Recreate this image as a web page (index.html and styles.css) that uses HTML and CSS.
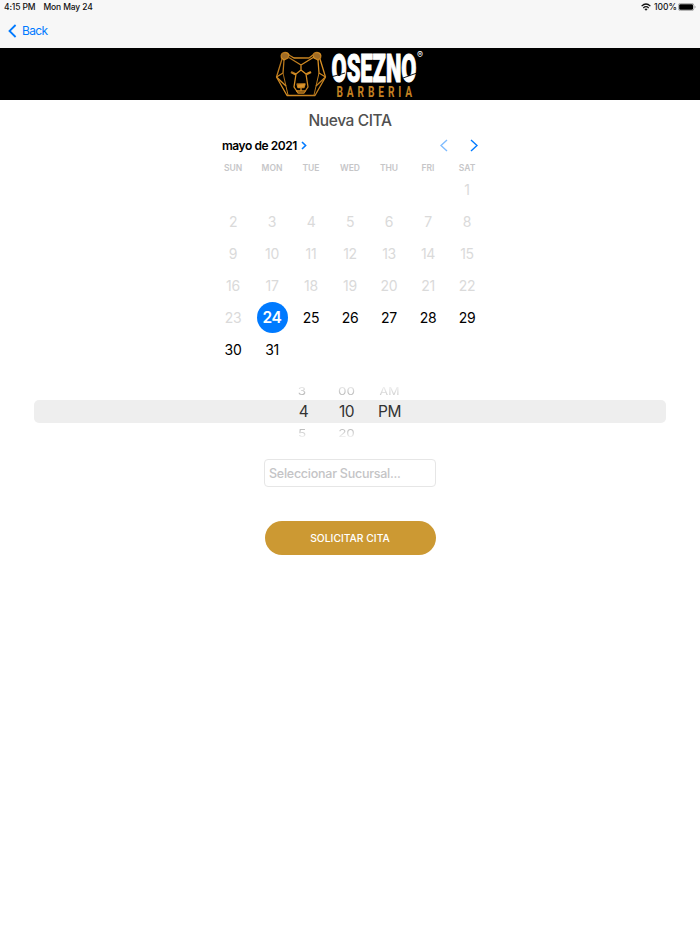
FILE: index.html
```html
<!DOCTYPE html>
<html lang="es">
<head>
  <meta charset="UTF-8" />
  <meta name="viewport" content="width=device-width, initial-scale=1.0" />
  <title>Nueva CITA</title>
  <link rel="stylesheet" href="styles.css">
</head>
<body>
  <header class="topbar">
    <div class="status">
      <span class="clock">4:15 PM</span>
      <span class="date">Mon May 24</span>
      <svg class="wifi" width="10" height="8" viewBox="0 0 10 8" fill="none" stroke="#111" stroke-width="1.3">
        <path d="M.6 3.1Q5-1.1 9.4 3.1M2.3 4.9Q5 2.4 7.7 4.9" />
        <path d="M3.4 6.1Q5 4.9 6.6 6.1L5 7.8z" fill="#111" stroke="none" />
      </svg>
      <span class="percent">100%</span>
      <svg class="battery" width="18" height="8" viewBox="0 0 18 8">
        <rect x=".4" y=".4" width="15.4" height="7.2" rx="2" fill="none" stroke="#999" stroke-width=".8" />
        <rect x="1.2" y="1.2" width="13.8" height="5.6" rx="1.2" fill="#000" />
        <path d="M16.6 2.7q1 .3 1 1.3t-1 1.3z" fill="#999" />
      </svg>
    </div>
    <a class="back" href="#">
      <svg width="9" height="14" viewBox="0 0 9 14"><path d="M7.6 1L1.5 7l6.1 6" /></svg>
      <span>Back</span>
    </a>
  </header>

  <div class="banner">
    <svg width="160" height="52" viewBox="270 48 160 52">
      <defs>
        <linearGradient id="gold" x1="0" y1="0" x2="1" y2="1">
          <stop offset="0" stop-color="#a86c1a" />
          <stop offset=".5" stop-color="#dc9224" />
          <stop offset="1" stop-color="#b8781d" />
        </linearGradient>
      </defs>
      <g transform="translate(274 48)" fill="none" stroke="url(#gold)" stroke-width="1.3" stroke-linejoin="round">
        <path d="M15 7L20 10H35L39 7" />
        <path d="M7.500 10Q6 5 11 4.300Q14 4.300 15 7L14 10L10 12z" fill="#a06c26" />
        <path d="M46.500 10Q48 5 43 4.300Q40 4.300 39 7L40 10L44 12z" fill="#a06c26" />
        <path d="M8 11L2.500 29L13 47.500H41L51.500 29L46 11" />
        <path d="M10 12L9 25L2.500 29L12 38M44 12L45 25L51.500 29L42 38" />
        <path d="M9 25L14 47M45 25L40 47" stroke-width=".9" />
        <path d="M14 9L27 17L40 9M27 17V22M27 22L22 26L20 39L24 45H30L34 39L32 26L27 22" />
        <path d="M17 24L22 26.500M37 24L32 26.500" stroke-width="2.400" />
        <path d="M23 36H31L30 39.500H24z" fill="#d99430" />
        <path d="M27 40V43M22 43H32" />
      </g>
      <text class="brand" transform="translate(331.500 81.500) scale(1 1.550)" textLength="85" lengthAdjust="spacingAndGlyphs">OSEZNO</text>
      <path d="M331 77l14-4M403 78l14-5" stroke="#000" stroke-width=".9" />
      <text class="brand-mark" x="417" y="58">®</text>
      <text class="brand-sub" transform="translate(336.500 96.700) scale(.7 1)" textLength="108">BARBERIA</text>
    </svg>
  </div>

  <main>
    <h1>Nueva CITA</h1>

    <section class="calendar">
      <div class="month">
        <span>mayo de 2021</span>
        <svg class="more" width="6" height="9" viewBox="0 0 6 9"><path d="M1 1l3.600 3.500L1 8" /></svg>
        <svg class="prev" width="8" height="13" viewBox="0 0 8 13"><path d="M7 1L1 6.500 7 12" /></svg>
        <svg class="next" width="8" height="13" viewBox="0 0 8 13"><path d="M1 1l6 5.500L1 12" /></svg>
      </div>
      <div class="week names">
        <span>SUN</span><span>MON</span><span>TUE</span><span>WED</span><span>THU</span><span>FRI</span><span>SAT</span>
      </div>
      <div class="week days">
        <span class="past first">1</span>
        <span class="past">2</span><span class="past">3</span><span class="past">4</span><span class="past">5</span><span class="past">6</span><span class="past">7</span><span class="past">8</span>
        <span class="past">9</span><span class="past">10</span><span class="past">11</span><span class="past">12</span><span class="past">13</span><span class="past">14</span><span class="past">15</span>
        <span class="past">16</span><span class="past">17</span><span class="past">18</span><span class="past">19</span><span class="past">20</span><span class="past">21</span><span class="past">22</span>
        <span class="past">23</span><span class="today">24</span><span>25</span><span>26</span><span>27</span><span>28</span><span>29</span>
        <span>30</span><span>31</span>
      </div>
    </section>

    <section class="wheel">
      <div class="wheel-row above"><span>3</span><span>00</span><span class="far">AM</span></div>
      <div class="wheel-row current"><span>4</span><span>10</span><span>PM</span></div>
      <div class="wheel-row below"><span>5</span><span>20</span><span></span></div>
    </section>

    <div class="branch">Seleccionar Sucursal...</div>
    <button class="btn" type="button">SOLICITAR CITA</button>
  </main>
</body>
</html>
```

FILE: styles.css
```css
:root {
  --blue: #007aff;
  --gold: #cc9933;
  --bar: #f7f7f7;
}
* { box-sizing: border-box; }
html, body {
  margin: 0; padding: 0;
  font-family: Inter, "Liberation Sans", sans-serif;
  background: #fff;
}
body { height: 934px; overflow: hidden; }
svg { display: block; }

.topbar { height: 48px; background: var(--bar); }
.status {
  display: flex; align-items: center;
  height: 14px; padding: 0 4px;
  font-size: 8.5px; font-weight: 500; color: #111;
  letter-spacing: -.15px;
}
.clock { width: 39.5px; white-space: nowrap; }
.wifi { margin-left: auto; }
.percent { width: 22px; margin: 0 2px 0 3px; white-space: nowrap; letter-spacing: 0; }
.back {
  display: inline-flex; align-items: center;
  height: 33px; padding-left: 8px; gap: 5px;
  font-size: 12px; color: var(--blue); text-decoration: none;
}
.back span { letter-spacing: -.65px; }
.back path { fill: none; stroke: var(--blue); stroke-width: 1.8; }

.banner {
  display: flex; justify-content: center;
  height: 52px; background: #000;
}
.brand {
  font-family: Roboto, sans-serif;
  font-size: 25.5px; font-weight: 900; fill: #fff;
  stroke: #fff; stroke-width: .7px;
}
.brand-mark { font-size: 9px; fill: #fff; }
.brand-sub {
  font-family: Roboto, sans-serif;
  font-size: 14.5px; font-weight: 700; fill: #c48222;
}

main { display: flex; flex-direction: column; align-items: center; }
h1 {
  margin: 10px 0 0; height: 20px; line-height: 21px;
  font-size: 15.5px; font-weight: 500; color: #505050;
  letter-spacing: -.4px;
}

.calendar { width: 273px; margin-top: 5px; }
.month {
  display: flex; align-items: center;
  height: 21px; padding: 0 9px 0 8.5px;
  font-size: 12px; font-weight: 600; color: #000;
  letter-spacing: -.45px;
}
.month path { fill: none; stroke: var(--blue); stroke-width: 1.4; }
.more { margin-left: 4px; }
.more path { stroke-width: 1.6; }
.prev { margin-left: auto; opacity: .5; }
.next { margin-left: 22px; }
.week { display: grid; grid-template-columns: repeat(7, 39px); text-align: center; }
.names {
  height: 18px; margin-top: 3px; line-height: 18px;
  font-size: 8.5px; font-weight: 600; color: #c6c6c8;
}
.days {
  grid-auto-rows: 32px; margin-top: -3px; line-height: 32px;
  font-size: 14px; color: #000; letter-spacing: -.3px;
  place-items: center;
}
.past { color: #dadada; }
.first { grid-column: 7; }
.today {
  width: 31px; height: 31px; margin-bottom: 1px; line-height: 31px;
  border-radius: 50%; background: var(--blue);
  font-size: 15.5px; font-weight: 600; color: #fff;
}

.wheel { width: 632px; margin-top: 17px; }
.wheel-row {
  display: grid; grid-template-columns: 43px 43px 43px;
  justify-content: center; text-align: center;
  padding-right: 7px;
  color: #333;
}
.wheel-row span { line-height: 24px; }
.current {
  height: 23px;
  border-radius: 5px; background: #eee;
  font-size: 15.5px; letter-spacing: -.5px;
}
.above, .below { height: 17px; overflow: hidden; font-size: 13.5px; color: #999; }
.above span, .below span { transform: scaleY(.8); }
.above span { line-height: 17px; }
.below span { line-height: 21px; }
.above span:first-child, .below span:first-child { padding-right: 3px; }
.far { font-size: 12.5px; color: #bbb; }
.above { -webkit-mask-image: linear-gradient(transparent, #000); mask-image: linear-gradient(transparent, #000); }
.below { -webkit-mask-image: linear-gradient(#000, transparent); mask-image: linear-gradient(#000, transparent); }

.branch {
  width: 172px; height: 28px; margin-top: 19px; padding-left: 4px;
  border: 1px solid #e6e6e6; border-radius: 4px;
  line-height: 27px; font-size: 12.5px; font-weight: 500; color: #c4c4c6;
  letter-spacing: -.25px; white-space: nowrap;
}
.btn {
  width: 171px; height: 34px; margin-top: 34px; padding: 0;
  border: none; border-radius: 17px; background: var(--gold);
  font-family: inherit; font-size: 10.3px; font-weight: 500; color: #fff;
}
```
